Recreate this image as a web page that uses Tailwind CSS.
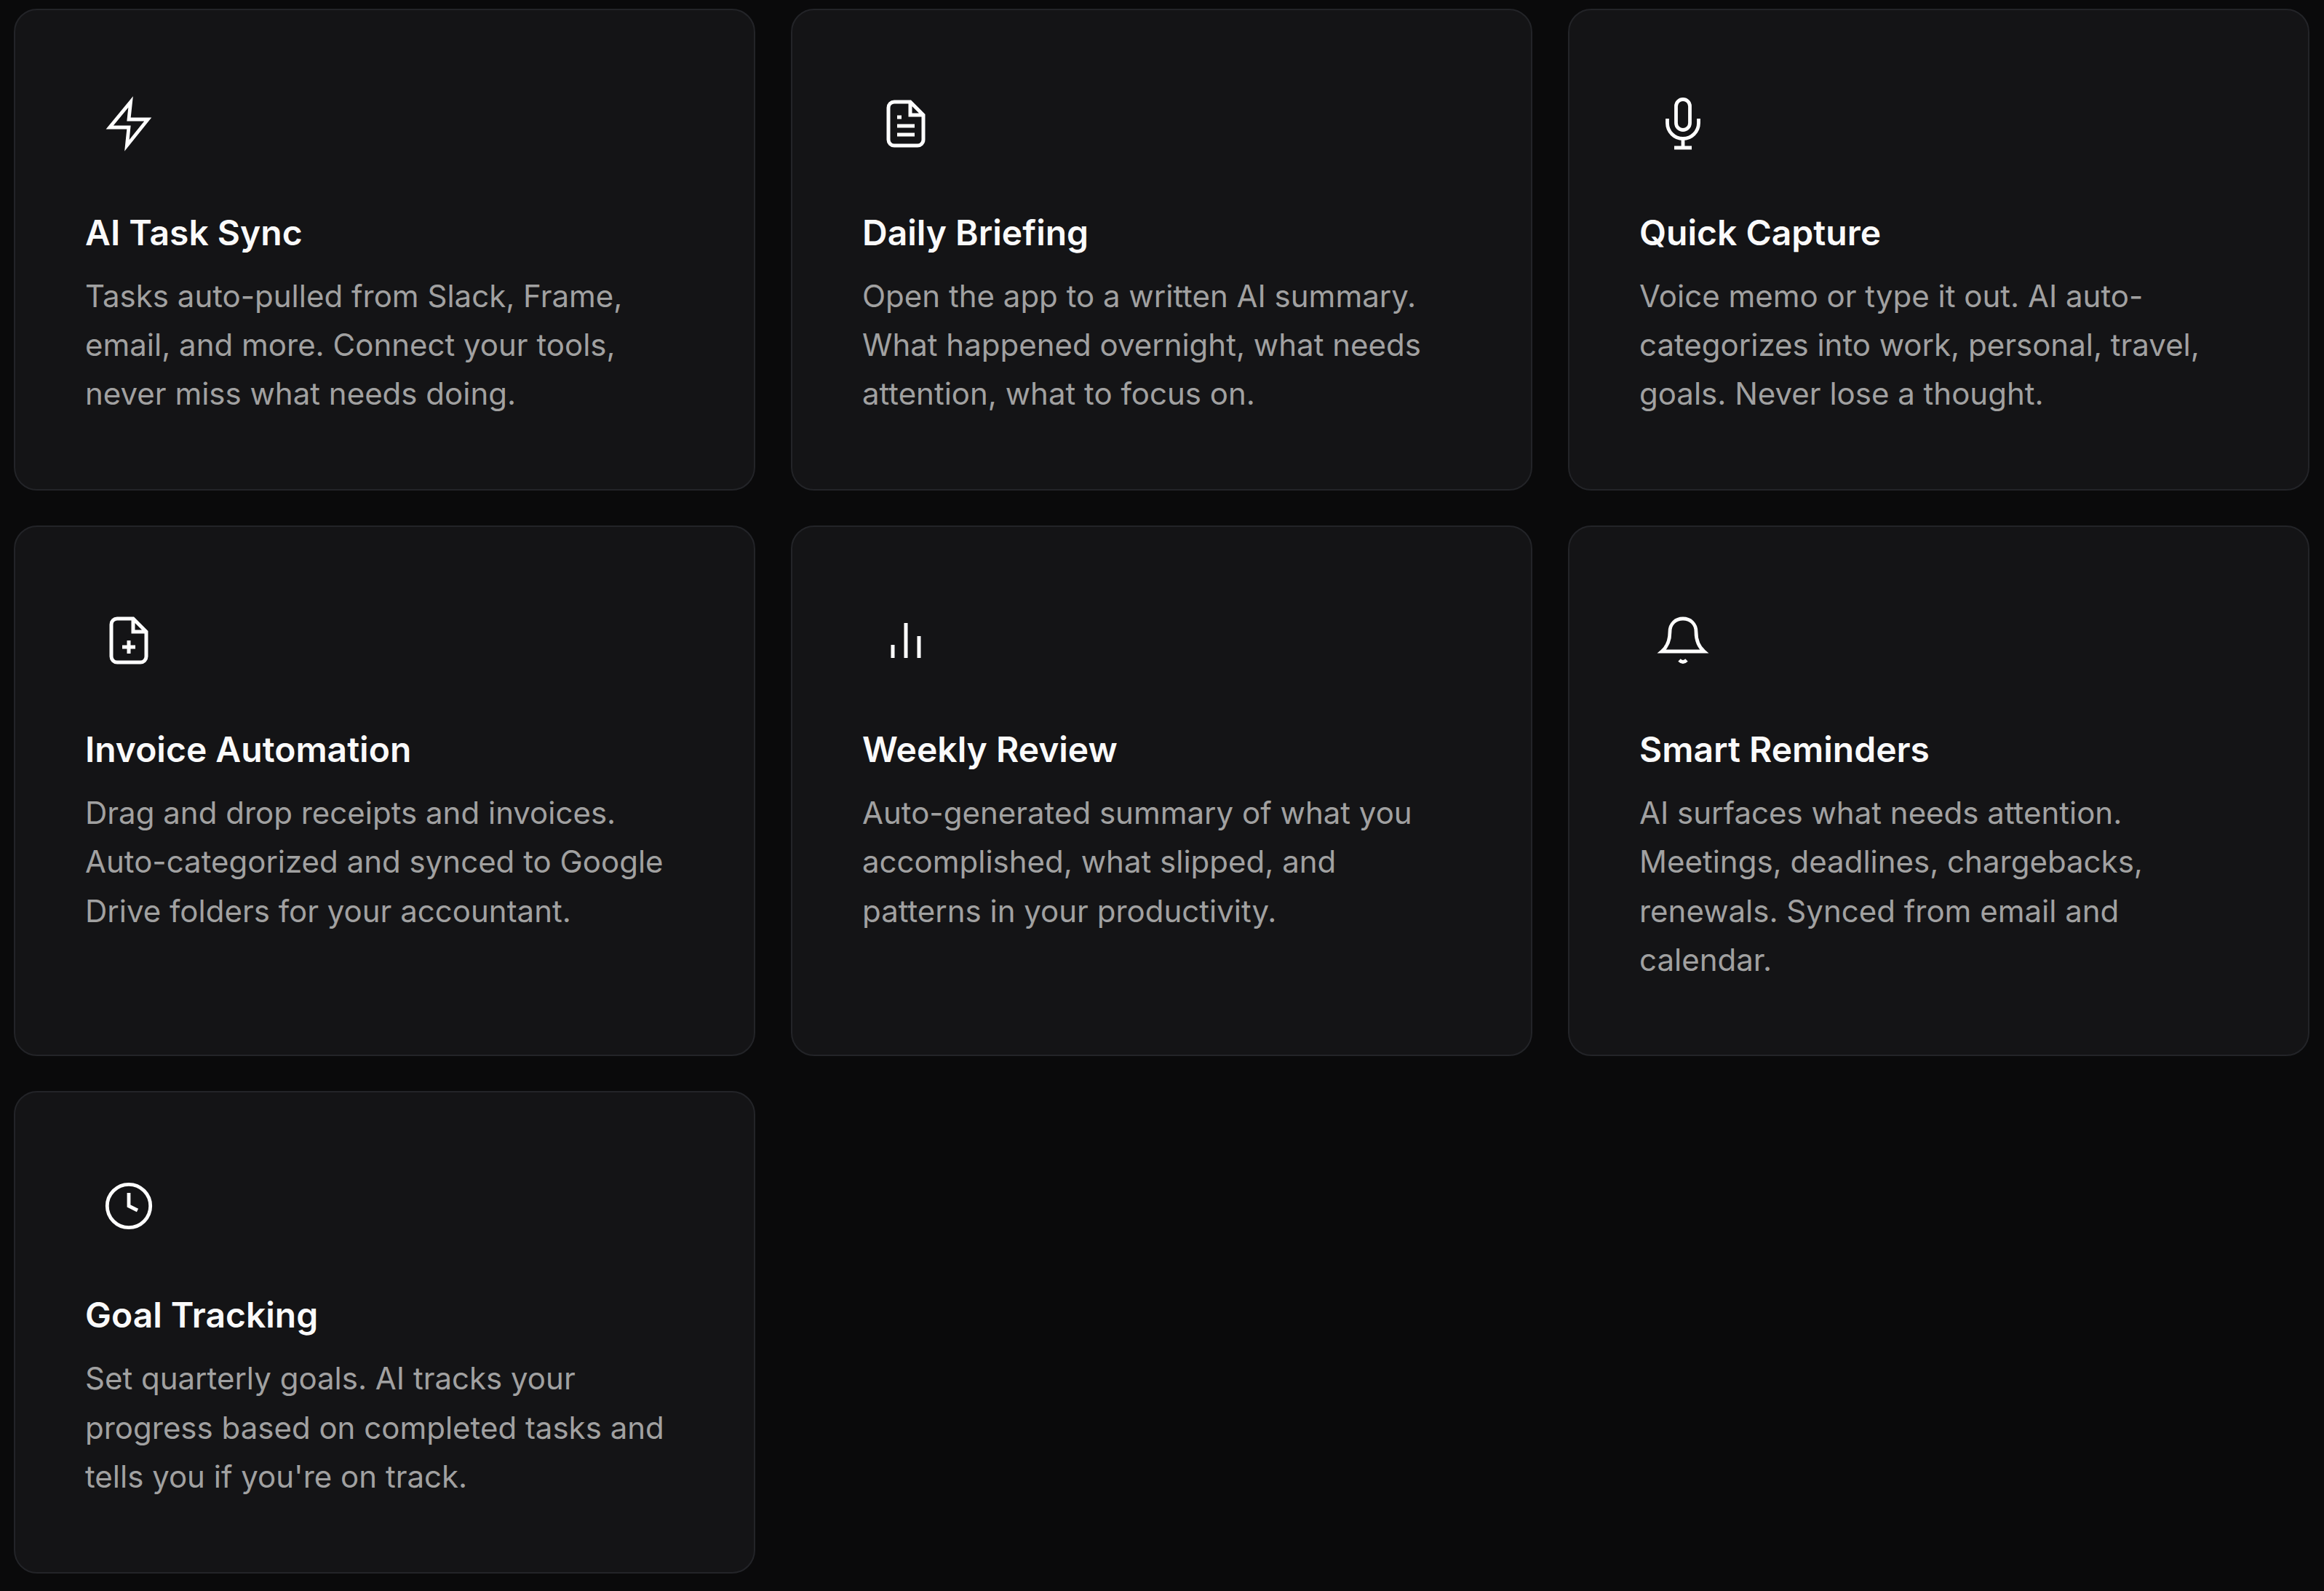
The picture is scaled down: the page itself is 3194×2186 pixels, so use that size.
<!DOCTYPE html>
<html lang="en">
<head>
<meta charset="UTF-8" />
<script src="https://cdn.jsdelivr.net/npm/@tailwindcss/browser@4"></script>
<title>Features</title>
</head>
<body class="w-full min-h-screen bg-[#0a0a0b] font-['Inter',sans-serif]">
<div class="grid grid-cols-[1019px_1019px_1019px] gap-x-[49px] gap-y-[48px] pl-[19px] pt-[12px] items-stretch">

  <div class="rounded-[32px] border-2 border-[#232428] bg-[#141416] px-[96px] pt-[96px] pb-[97.5px]">
    <div class="w-[120px] h-[120px] flex items-center justify-center">
      <svg width="120" height="120" viewBox="0 0 120 120" fill="none" stroke="white" stroke-width="4.8" stroke-miterlimit="10"><path d="M33.7 65 L62.6 30 L60 54 L86.3 54 L57.4 90 L60 65 Z"/></svg>
    </div>
    <h3 class="mt-[54px] text-[48px] leading-[72px] font-semibold text-[#fafafa]">AI Task Sync</h3>
    <p class="mt-[17px] text-[42px] leading-[67.2px] text-[#a1a1a1]">Tasks auto-pulled from Slack, Frame, email, and more. Connect your tools, never miss what needs doing.</p>
  </div>

  <div class="rounded-[32px] border-2 border-[#232428] bg-[#141416] px-[96px] pt-[96px] pb-[97.5px]">
    <div class="w-[120px] h-[120px] flex items-center justify-center">
      <svg width="120" height="120" viewBox="0 0 120 120" fill="none" stroke="white" stroke-width="5"><path d="M36 38 a8 8 0 0 1 8 -8 h22 l18 18 v34 a8 8 0 0 1 -8 8 h-32 a8 8 0 0 1 -8 -8 Z M66 30 v18 h18 M48 51 h6 M48 63 h24 M48 75 h24"/></svg>
    </div>
    <h3 class="mt-[54px] text-[48px] leading-[72px] font-semibold text-[#fafafa]">Daily Briefing</h3>
    <p class="mt-[17px] text-[42px] leading-[67.2px] text-[#a1a1a1]">Open the app to a written AI summary. What happened overnight, what needs attention, what to focus on.</p>
  </div>

  <div class="rounded-[32px] border-2 border-[#232428] bg-[#141416] px-[96px] pt-[96px] pb-[97.5px]">
    <div class="w-[120px] h-[120px] flex items-center justify-center">
      <svg width="120" height="120" viewBox="0 0 120 120" fill="none" stroke="white" stroke-width="4.8"><path d="M50.5 36 a9.5 9.5 0 0 1 19 0 v23 a9.5 9.5 0 0 1 -19 0 Z M38.5 53 v6 a21.5 21.5 0 0 0 43 0 v-6 M60 80.5 v12.5 M48 93 h24"/></svg>
    </div>
    <h3 class="mt-[54px] text-[48px] leading-[72px] font-semibold text-[#fafafa]">Quick Capture</h3>
    <p class="mt-[17px] text-[42px] leading-[67.2px] text-[#a1a1a1]">Voice memo or type it out. AI auto-categorizes into work, personal, travel, goals. Never lose a thought.</p>
  </div>

  <div class="rounded-[32px] border-2 border-[#232428] bg-[#141416] px-[96px] pt-[96px] pb-[97.5px]">
    <div class="w-[120px] h-[120px] flex items-center justify-center">
      <svg width="120" height="120" viewBox="0 0 120 120" fill="none" stroke="white" stroke-width="5"><path d="M36 38 a8 8 0 0 1 8 -8 h22 l18 18 v34 a8 8 0 0 1 -8 8 h-32 a8 8 0 0 1 -8 -8 Z M66 30 v18 h18 M60 60 v18 M51 69 h18"/></svg>
    </div>
    <h3 class="mt-[54px] text-[48px] leading-[72px] font-semibold text-[#fafafa]">Invoice Automation</h3>
    <p class="mt-[17px] text-[42px] leading-[67.2px] text-[#a1a1a1]">Drag and drop receipts and invoices. Auto-categorized and synced to Google Drive folders for your accountant.</p>
  </div>

  <div class="rounded-[32px] border-2 border-[#232428] bg-[#141416] px-[96px] pt-[96px] pb-[97.5px]">
    <div class="w-[120px] h-[120px] flex items-center justify-center">
      <svg width="120" height="120" viewBox="0 0 120 120" fill="none" stroke="white" stroke-width="5"><path d="M42 84 V66 M60 84 V36 M78 84 V54"/></svg>
    </div>
    <h3 class="mt-[54px] text-[48px] leading-[72px] font-semibold text-[#fafafa]">Weekly Review</h3>
    <p class="mt-[17px] text-[42px] leading-[67.2px] text-[#a1a1a1]">Auto-generated summary of what you accomplished, what slipped, and patterns in your productivity.</p>
  </div>

  <div class="rounded-[32px] border-2 border-[#232428] bg-[#141416] px-[96px] pt-[96px] pb-[97.5px]">
    <div class="w-[120px] h-[120px] flex items-center justify-center">
      <svg width="120" height="120" viewBox="0 0 120 120" fill="none" stroke="white" stroke-width="4.8" stroke-miterlimit="10"><path d="M31 75 C38 69 42 60 42 48 C42 37 50 30 60 30 C70 30 78 37 78 48 C78 60 82 69 89 75 Z M55 87 Q60 92 65 87"/></svg>
    </div>
    <h3 class="mt-[54px] text-[48px] leading-[72px] font-semibold text-[#fafafa]">Smart Reminders</h3>
    <p class="mt-[17px] text-[42px] leading-[67.2px] text-[#a1a1a1]">AI surfaces what needs attention. Meetings, deadlines, chargebacks, renewals. Synced from email and calendar.</p>
  </div>

  <div class="rounded-[32px] border-2 border-[#232428] bg-[#141416] px-[96px] pt-[96px] pb-[97.5px]">
    <div class="w-[120px] h-[120px] flex items-center justify-center">
      <svg width="120" height="120" viewBox="0 0 120 120" fill="none" stroke="white" stroke-width="4.8"><circle cx="60" cy="60" r="29.7"/><path d="M60 42 V60 L72 66"/></svg>
    </div>
    <h3 class="mt-[54px] text-[48px] leading-[72px] font-semibold text-[#fafafa]">Goal Tracking</h3>
    <p class="mt-[17px] text-[42px] leading-[67.2px] text-[#a1a1a1]">Set quarterly goals. AI tracks your progress based on completed tasks and tells you if you're on track.</p>
  </div>

</div>
</body>
</html>
